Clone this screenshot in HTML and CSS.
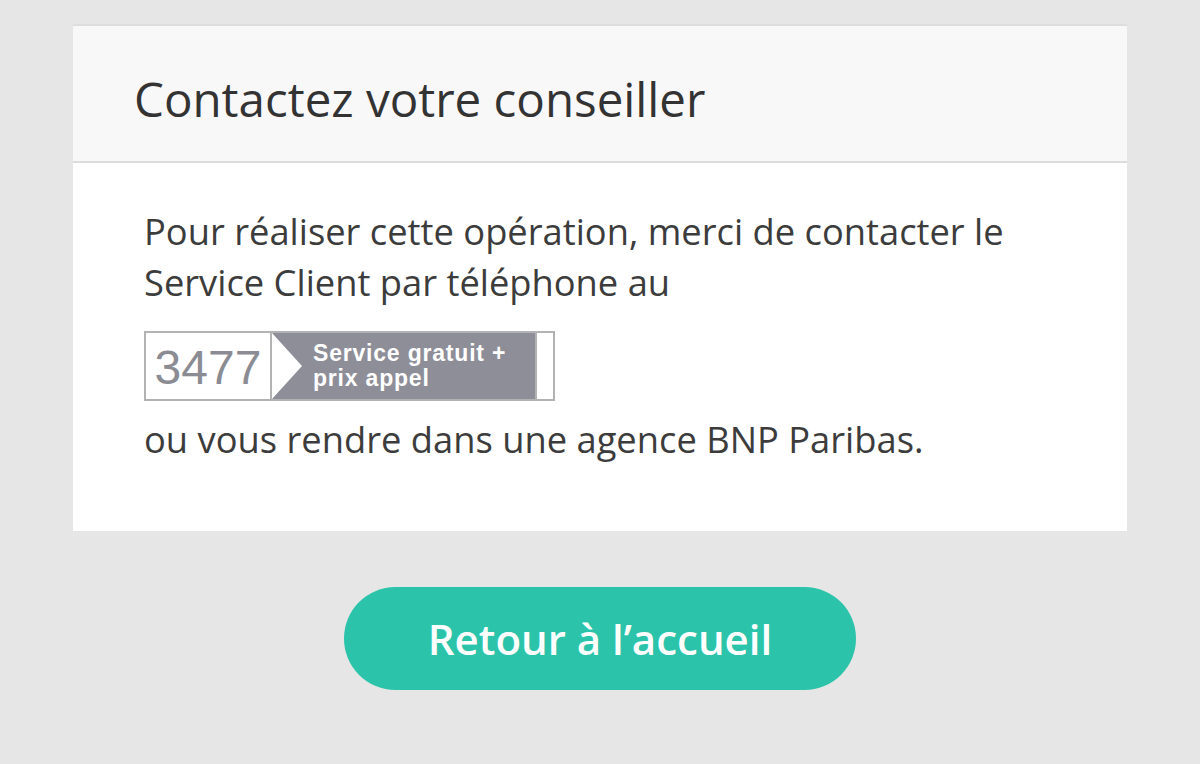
FILE: index.html
```html
<!DOCTYPE html>
<html>
<head>
    <title>Contactez votre conseiller</title>
    <link rel="stylesheet" href="styles.css">
</head>
<body>
    <div class="page">
        <div class="card">
            <div class="card-header">
                <h1>Contactez votre conseiller</h1>
            </div>
            <div class="card-body">
                <p>Pour réaliser cette opération, merci de contacter le Service Client par téléphone au</p>
                <div class="phone">
                    <span class="phone-number">3477</span>
                    <span class="phone-info">
                        <span class="phone-arrow"></span>
                        <span class="phone-text">Service gratuit +<br>prix appel</span>
                    </span>
                    <span class="phone-end"></span>
                </div>
                <p>ou vous rendre dans une agence BNP Paribas.</p>
            </div>
        </div>
        <div class="actions">
            <button class="home-btn">Retour à l’accueil</button>
        </div>
    </div>
</body>
</html>
```

FILE: styles.css
```css
body {
    margin: 0;
    padding: 0;
    background-color: #e6e6e6;
    font-family: 'Open Sans', 'Noto Sans', sans-serif;
    color: #333333;
}
.page {
    padding: 24px 73px 0;
}
.card {
    background-color: white;
    border-top: 2px solid #dedede;
}
.card-header {
    background-color: #f9f8f9;
    border-bottom: 2px solid #dcdcdf;
    height: 135px;
    display: flex;
    align-items: center;
    padding: 0 61px;
}
.card-header h1 {
    margin: 0;
    font-size: 47.5px;
    font-weight: 400;
    color: #333333;
    padding-top: 10px;
}
.card-body {
    padding: 43px 71px 66px;
}
.card-body p {
    margin: 0;
    font-size: 36.3px;
    line-height: 51px;
    color: #3c3c3c;
}
.phone {
    display: flex;
    width: 407px;
    height: 66px;
    border: 2px solid #b2b2b5;
    margin: 23px 0 13px;
    background-color: white;
}
.phone-number {
    width: 124px;
    border-right: 2px solid #b2b2b5;
    display: flex;
    align-items: center;
    justify-content: center;
    font-family: 'Liberation Sans', Arial, sans-serif;
    font-size: 48px;
    color: #8b8b93;
    padding-top: 2px;
}
.phone-info {
    flex: 1;
    background-color: #8e8e98;
    display: flex;
    align-items: center;
}
.phone-arrow {
    width: 0;
    height: 0;
    border-top: 33px solid transparent;
    border-bottom: 33px solid transparent;
    border-left: 30px solid white;
}
.phone-text {
    font-family: 'Liberation Sans', Arial, sans-serif;
    font-weight: bold;
    font-size: 23px;
    letter-spacing: 0.8px;
    line-height: 25px;
    color: white;
    padding-left: 11px;
}
.phone-end {
    width: 16px;
    border-left: 2px solid #b2b2b5;
}
.actions {
    display: flex;
    justify-content: center;
    padding-top: 56px;
}
.home-btn {
    width: 512px;
    height: 103px;
    border: none;
    border-radius: 52px;
    background-color: #2bc4aa;
    color: white;
    font-family: 'Open Sans', 'Noto Sans', sans-serif;
    font-weight: 600;
    font-size: 42px;
    cursor: pointer;
}
```
